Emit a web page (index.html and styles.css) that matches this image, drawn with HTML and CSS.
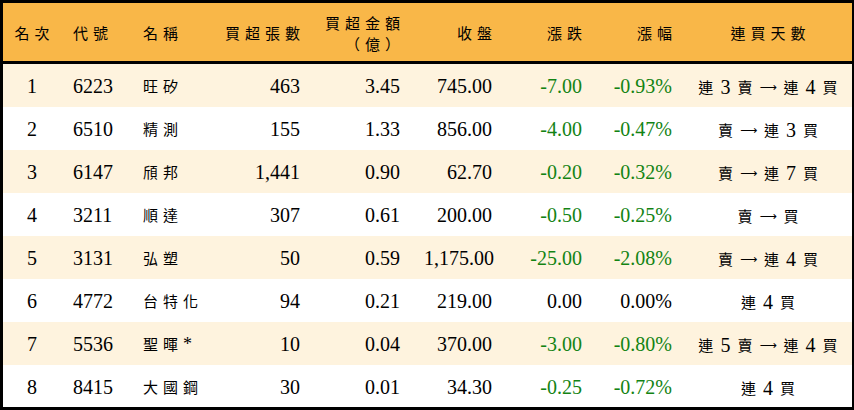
FILE: index.html
```html
<!DOCTYPE html>
<html lang="zh-Hant">
<head>
<meta charset="utf-8">
<link rel="stylesheet" href="styles.css">
</head>
<body>
<div class="frame">
<table class="grid">
<colgroup>
<col class="w1"><col class="w2"><col class="w3"><col class="w4"><col class="w5"><col class="w6"><col class="w7"><col class="w8"><col class="w9">
</colgroup>
<thead>
<tr>
<th class="c">名次</th>
<th class="l">代號</th>
<th class="l">名稱</th>
<th class="r">買超張數</th>
<th class="r two">買超金額<br>（億）</th>
<th class="r">收盤</th>
<th class="r">漲跌</th>
<th class="r">漲幅</th>
<th class="c">連買天數</th>
</tr>
</thead>
<tbody>
<tr class="odd">
<td class="c">1</td><td class="l">6223</td><td class="l name">旺矽</td><td class="r">463</td><td class="r">3.45</td><td class="r">745.00</td><td class="r g">-7.00</td><td class="r g">-0.93%</td>
<td class="c"><span class="days"><span class="k">連</span><span>3</span><span class="k">賣</span><span class="ar">⟶</span><span class="k">連</span><span>4</span><span class="k">買</span></span></td>
</tr>
<tr>
<td class="c">2</td><td class="l">6510</td><td class="l name">精測</td><td class="r">155</td><td class="r">1.33</td><td class="r">856.00</td><td class="r g">-4.00</td><td class="r g">-0.47%</td>
<td class="c"><span class="days"><span class="k">賣</span><span class="ar">⟶</span><span class="k">連</span><span>3</span><span class="k">買</span></span></td>
</tr>
<tr class="odd">
<td class="c">3</td><td class="l">6147</td><td class="l name">頎邦</td><td class="r">1,441</td><td class="r">0.90</td><td class="r">62.70</td><td class="r g">-0.20</td><td class="r g">-0.32%</td>
<td class="c"><span class="days"><span class="k">賣</span><span class="ar">⟶</span><span class="k">連</span><span>7</span><span class="k">買</span></span></td>
</tr>
<tr>
<td class="c">4</td><td class="l">3211</td><td class="l name">順達</td><td class="r">307</td><td class="r">0.61</td><td class="r">200.00</td><td class="r g">-0.50</td><td class="r g">-0.25%</td>
<td class="c"><span class="days"><span class="k">賣</span><span class="ar">⟶</span><span class="k">買</span></span></td>
</tr>
<tr class="odd">
<td class="c">5</td><td class="l">3131</td><td class="l name">弘塑</td><td class="r">50</td><td class="r">0.59</td><td class="r">1,175.00</td><td class="r g">-25.00</td><td class="r g">-2.08%</td>
<td class="c"><span class="days"><span class="k">賣</span><span class="ar">⟶</span><span class="k">連</span><span>4</span><span class="k">買</span></span></td>
</tr>
<tr>
<td class="c">6</td><td class="l">4772</td><td class="l name">台特化</td><td class="r">94</td><td class="r">0.21</td><td class="r">219.00</td><td class="r">0.00</td><td class="r">0.00%</td>
<td class="c"><span class="days"><span class="k">連</span><span>4</span><span class="k">買</span></span></td>
</tr>
<tr class="odd">
<td class="c">7</td><td class="l">5536</td><td class="l name">聖暉<span class="ast">*</span></td><td class="r">10</td><td class="r">0.04</td><td class="r">370.00</td><td class="r g">-3.00</td><td class="r g">-0.80%</td>
<td class="c"><span class="days"><span class="k">連</span><span>5</span><span class="k">賣</span><span class="ar">⟶</span><span class="k">連</span><span>4</span><span class="k">買</span></span></td>
</tr>
<tr>
<td class="c">8</td><td class="l">8415</td><td class="l name">大國鋼</td><td class="r">30</td><td class="r">0.01</td><td class="r">34.30</td><td class="r g">-0.25</td><td class="r g">-0.72%</td>
<td class="c"><span class="days"><span class="k">連</span><span>4</span><span class="k">買</span></span></td>
</tr>
</tbody>
</table>
</div>
</body>
</html>
```

FILE: styles.css
```css
html, body {
  margin: 0;
  padding: 0;
  background: #ffffff;
}

.frame {
  width: 854px;
  height: 410px;
  box-sizing: border-box;
  border: 3px solid #000;
  border-right-width: 2px;
  background: #fff;
}

.grid {
  width: 849px;
  table-layout: fixed;
  border-collapse: separate;
  border-spacing: 0;
  font-family: "Liberation Serif", "Noto Sans CJK TC", serif;
  font-size: 20px;
  color: #000;
}

.w1 { width: 58px; }
.w2 { width: 70px; }
.w3 { width: 81px; }
.w4 { width: 100px; }
.w5 { width: 100px; }
.w6 { width: 92px; }
.w7 { width: 90px; }
.w8 { width: 90px; }
.w9 { width: 168px; }

th {
  background: #f9b748;
  height: 57px;
  padding: 0 12px;
  border-bottom: 3px solid #000;
  font-family: "Noto Sans CJK TC", sans-serif;
  font-size: 15px;
  font-weight: 400;
  letter-spacing: 5px;
  line-height: 21px;
  vertical-align: middle;
  white-space: nowrap;
}

th.r { padding-right: 7px; }
th.c { padding: 0 0 0 5px; }
th.two { padding-top: 1px; }

td {
  height: 43px;
  padding: 0 12px;
  vertical-align: middle;
  white-space: nowrap;
  line-height: 22px;
}

tr.odd td { background: #fef3de; }

.c { text-align: center; }
.l { text-align: left; }
.r { text-align: right; }

td.c { padding: 0; }

.name {
  font-family: "Noto Sans CJK TC", sans-serif;
  font-size: 15px;
  letter-spacing: 5px;
}

.ast {
  font-family: "Liberation Serif", serif;
  font-size: 18px;
  letter-spacing: 0;
}

.g { color: #138313; }

.days {
  display: inline-flex;
  align-items: center;
  gap: 7px;
  vertical-align: middle;
}

.days .k {
  font-family: "Noto Sans CJK TC", sans-serif;
  font-size: 15px;
}

.days .ar {
  font-family: "DejaVu Sans", sans-serif;
  font-size: 12px;
}
```
